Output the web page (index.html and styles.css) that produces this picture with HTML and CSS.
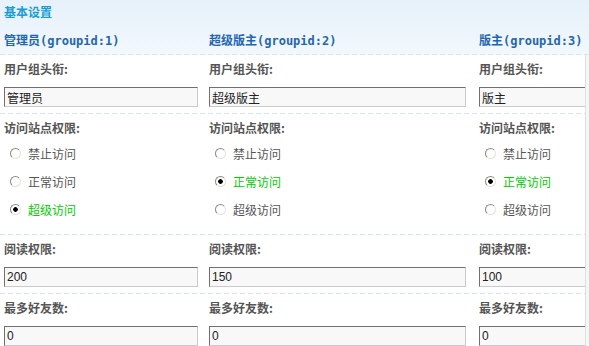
FILE: index.html
```html
<!DOCTYPE html>
<html lang="zh-CN">
<head>
  <meta charset="UTF-8">
  <title>基本设置</title>
<link rel="stylesheet" href="styles.css">
</head>
<body>
  <div class="header">
    <div class="title">基本设置</div>
    <div class="row groups">
      <div class="group">管理员(groupid:1)</div>
      <div class="group">超级版主(groupid:2)</div>
      <div class="group">版主(groupid:3)</div>
    </div>
  </div>

  <div class="table">
    <div class="row">
      <div class="cell">
        <div class="label">用户组头衔:</div>
        <input type="text" class="text w1" value="管理员">
      </div>
      <div class="cell">
        <div class="label">用户组头衔:</div>
        <input type="text" class="text w2" value="超级版主">
      </div>
      <div class="cell">
        <div class="label">用户组头衔:</div>
        <input type="text" class="text w2" value="版主">
      </div>
    </div>

    <div class="row radios">
      <div class="cell">
        <div class="label">访问站点权限:</div>
        <label class="opt"><input type="radio" name="a1"> 禁止访问</label>
        <label class="opt"><input type="radio" name="a1"> 正常访问</label>
        <label class="opt on"><input type="radio" name="a1" checked> 超级访问</label>
      </div>
      <div class="cell">
        <div class="label">访问站点权限:</div>
        <label class="opt"><input type="radio" name="a2"> 禁止访问</label>
        <label class="opt on"><input type="radio" name="a2" checked> 正常访问</label>
        <label class="opt"><input type="radio" name="a2"> 超级访问</label>
      </div>
      <div class="cell">
        <div class="label">访问站点权限:</div>
        <label class="opt"><input type="radio" name="a3"> 禁止访问</label>
        <label class="opt on"><input type="radio" name="a3" checked> 正常访问</label>
        <label class="opt"><input type="radio" name="a3"> 超级访问</label>
      </div>
    </div>

    <div class="row">
      <div class="cell">
        <div class="label">阅读权限:</div>
        <input type="text" class="text w1" value="200">
      </div>
      <div class="cell">
        <div class="label">阅读权限:</div>
        <input type="text" class="text w2" value="150">
      </div>
      <div class="cell">
        <div class="label">阅读权限:</div>
        <input type="text" class="text w2" value="100">
      </div>
    </div>

    <div class="row">
      <div class="cell">
        <div class="label">最多好友数:</div>
        <input type="text" class="text w1" value="0">
      </div>
      <div class="cell">
        <div class="label">最多好友数:</div>
        <input type="text" class="text w2" value="0">
      </div>
      <div class="cell">
        <div class="label">最多好友数:</div>
        <input type="text" class="text w2" value="0">
      </div>
    </div>
  </div>
</body>
</html>
```

FILE: styles.css
```css
body {
  margin: 0;
  background-color: #f6f6f6;
  font-family: "Noto Sans CJK SC", sans-serif;
  font-size: 12px;
  color: #555;
  overflow: hidden;
}
.header {
  background: linear-gradient(#e6f1fa, #f2f8fd);
  overflow: hidden;
}
.title {
  height: 24px;
  line-height: 24px;
  padding-left: 4px;
  color: #1a9cd6;
  font-weight: bold;
}
.row {
  display: grid;
  grid-template-columns: 205px 270px 1fr;
  padding: 5px 0 7px;
  background-image: linear-gradient(to right, #d4e5f4 5px, transparent 5px);
  background-size: 8px 1px;
  background-repeat: repeat-x;
  background-position: left bottom;
}
.groups {
  padding: 8px 0 5px;
}
.group {
  padding-left: 4px;
  line-height: 18px;
  font-family: "DejaVu Sans Mono", "Noto Sans CJK SC", monospace;
  font-weight: bold;
  color: #2466ad;
  white-space: nowrap;
}
.table {
  width: 585px;
  overflow: hidden;
  background-color: #fff;
  border-right: 1px solid #dedede;
}
.cell {
  min-width: 0;
  overflow: hidden;
  padding-left: 4px;
  white-space: nowrap;
}
.label {
  line-height: 18px;
  font-weight: bold;
  color: #555;
  margin-bottom: 9px;
}
.text {
  display: block;
  box-sizing: border-box;
  height: 20px;
  margin: 0;
  padding: 0 2px;
  border: 1px solid;
  border-color: #707070 #cacaca #cacaca #707070;
  background-color: #f8f8f8;
  font-family: "Liberation Sans", "Noto Sans CJK SC", sans-serif;
  font-size: 12px;
  color: #222;
}
.w1 {
  width: 194px;
}
.w2 {
  width: 257px;
}
.radios {
  padding-bottom: 12px;
}
.radios .label {
  margin-bottom: 2px;
}
.opt {
  display: flex;
  align-items: center;
  height: 28px;
  gap: 7px;
  padding-left: 6px;
  color: #555;
}
.opt.on {
  color: #00cc00;
}
.opt input {
  appearance: none;
  -webkit-appearance: none;
  flex: none;
  width: 11px;
  height: 11px;
  margin: 0;
  border: 1px solid;
  border-color: #8a8a80 #e4e4da #e4e4da #8a8a80;
  border-radius: 50%;
  background-color: #fff;
}
.opt input:checked {
  background: radial-gradient(circle, #000 2px, #fff 2.6px);
}
```
